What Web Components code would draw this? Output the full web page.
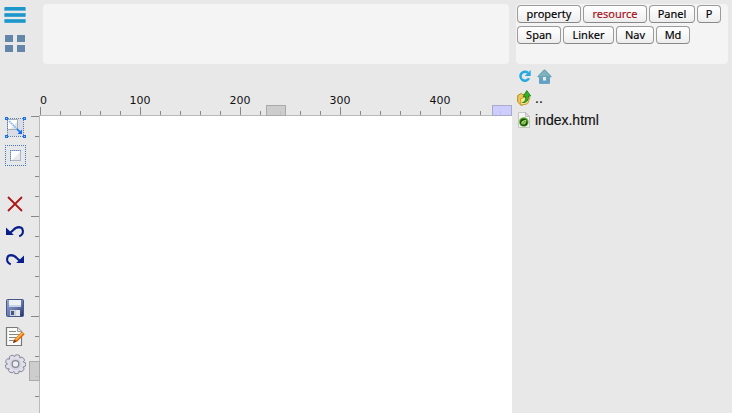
<!DOCTYPE html>
<html lang="en"><head><meta charset="utf-8"><title>Page editor</title>
<style>html,body{margin:0;width:100%;height:100%;overflow:hidden;background:#e8e8e8}</style></head>
<body><page-editor></page-editor>
<script>
const define=(name,html)=>customElements.define(name,class extends HTMLElement{
  constructor(){super();this.attachShadow({mode:'open'});}
  connectedCallback(){const t=document.createElement('template');t.innerHTML=typeof html==='function'?html(this):html;this.shadowRoot.replaceChildren(t.content.cloneNode(true));}
});
const corner=(x,y)=>`<path fill="#1470f0" d="M${x} ${y}h3v3h-3z"/><path fill="#9cc9ff" d="M${x+1} ${y+1}h1v1h-1z"/>`;
const gear=(()=>{let p='';for(let i=0;i<9;i++){const a=i*2*Math.PI/9-1.35;const f=(r,d)=>(10.5+r*Math.cos(a+d)).toFixed(1)+' '+(10.2+r*.93*Math.sin(a+d)).toFixed(1);p+=(i?'L':'M')+f(8,-.34)+'L'+f(10,-.22)+'Q'+f(10.8,0)+' '+f(10,.22)+'L'+f(8,.34);}return p+'Z';})();
const turn='<path d="M0 1.5V9h7.8z" fill="#071e8c"/><path d="M4.5 6.5L7 4.4M7 4.4C9 1.8 10.5 1.1 13 1.1C17.8 1.3 18.5 8.6 13.2 10.2" fill="none" stroke="#071e8c" stroke-width="2.1"/>';
const icons={
menu:[24,20,'<g fill="#62b4d8"><rect x="1" width="22" height="4" rx="1"/><rect x="1" y="6" width="22" height="4" rx="1"/><rect x="1" y="12" width="22" height="4" rx="1"/></g><g fill="#1c97ca"><path d="M2 0h20v3H2zM2 6.5h20v3H2zM2 12.5h20v3H2z"/></g>'],
grid:[20,18,'<path fill="#6487a9" d="M0 0h8v7H0zM12 0h8v7h-8zM0 10h8v7H0zM12 10h8v7h-8z"/>'],
resize:[21,21,'<path fill="#dadde5" d="M2 2h17v17H2z"/><rect x="2.5" y="2.5" width="10" height="10" fill="#fff" stroke="#a8adb9"/><path d="M12 5v7H5z" fill="#e6e6e8"/><path d="M3 1.5h15M3 19.5h15M2.5 3v15M18.5 3v15" shape-rendering="crispEdges" fill="none" stroke="#5e7da9" stroke-dasharray="1 1"/><path d="M4 4l9 9" stroke="#88bbf7" stroke-width="1.7" stroke-dasharray="2 .5"/><path d="M12 12l3 3" stroke="#2c82e8" stroke-width="1.8"/><path d="M17 12.5V17h-4.5z" fill="#126cea"/>'+corner(0,0)+corner(18,0)+corner(0,18)+corner(18,18)],
frame:[21,21,'<path d="M1 1h19v19H1z" fill="#e6e7e9"/><g shape-rendering="crispEdges" stroke="#3f77c4" stroke-dasharray="1 1"><path d="M0 .5h21M0 20.5h21M.5 0v21M20.5 0v21"/></g><rect x="5.5" y="5.5" width="10" height="10" fill="#fff" stroke="#b0b5bf"/><path d="M15 7v8H7z" fill="#e8e9ec"/><g shape-rendering="crispEdges" stroke="#578dcd" stroke-dasharray="1 1"><path d="M5 5.5h11M5.5 5v11"/></g>'],
remove:[16,16,'<path d="M1 1l14 14M15 1L1 15" stroke="#ad1719" stroke-width="1.8" fill="none"/>'],
undo:[18,12,turn],
redo:[18,12,`<g transform="matrix(-1 0 0 1 18 0)">${turn}</g>`],
save:[18,18,'<defs><linearGradient id="a" x1="0" y1="0" x2="1" y2="1"><stop stop-color="#9ba7ca"/><stop offset=".55" stop-color="#6476ac"/><stop offset="1" stop-color="#242e68"/></linearGradient></defs><rect x=".5" y=".5" width="17" height="17" rx="1" fill="url(#a)" stroke="#47578b"/><path d="M3 1h12v7H3z" fill="#edf2f8"/><path d="M3 6h12v2H3z" fill="#c3d3e8"/><path d="M4 11h10v6H4z" fill="#cbd0d5"/><path d="M5 12h3v4H5z" fill="#46558b"/><path d="M10 11h4v6h-4z" fill="#e4e6ea"/>'],
edit:[20,21,'<path d="M1.5 1.5h11l4 4v14h-15z" fill="#fafaf8" stroke="#777b78" stroke-width="1.2"/><path d="M12.5 1.5v4h4" fill="#e8e8e5" stroke="#999"/><path d="M4 5.5h7M4 8.5h10M4 11.5h8M4 14.5h5" stroke="#858986"/><path d="M8 17l1.5-3.8 7.5-7.7 2.7 2.7-7.7 7.5z" fill="#d9630d"/><path d="M10 13.2l7-7 1.4 1.4-6.6 6.7z" fill="#ffb03c"/><path d="M8 17l1.2-3 1.8 1.8z" fill="#4c3320"/>'],
gear:[21,21,`<path d="${gear}" fill="#e0e0ea" stroke="#85859a" stroke-linejoin="round"/><circle cx="10.5" cy="10.2" r="5.7" fill="#d3d3df"/><circle cx="10.5" cy="10" r="3.3" fill="#eee" stroke="#8a8998" stroke-width="1.3"/>`],
refresh:[12,12,'<path d="M10 8.3A4.5 4.5 0 1 1 8.9 2.8" stroke="#28a9e0" stroke-width="2.5" fill="none"/><path d="M11.7 0v5.9H5.7z" fill="#28a9e0"/>'],
home:[15,15,'<path d="M6 1.5Q7.5-.5 9 1.5l5.5 5.7Q15 8.5 13 8.5v5q0 1.2-1.2 1.2H3.2Q2 14.7 2 13.5v-5Q0 8.5.5 7.2z" fill="#6aa5b8"/><path d="M7.5 1.5L13 7H2z" fill="#7eb2bf"/><path d="M2.2 10h10.6v4q-.3.7-1 .7H3q-.8 0-.8-.7z" fill="#669fc4"/><path d="M6 8h3v3.5H6z" fill="#e3edf1"/>'],
folder:[15,16,'<path d="M.7 5.5l3.5-2 1.8 1.2 3.5-1.2v10L4 15.3.7 12z" fill="#edc85a" stroke="#b88c1d"/><path d="M3.5 8.5l7.8-2.2 1.8 1-2.5 6.4L4 15.2z" fill="#ffe995" stroke="#c49c2d"/><path d="M5.5 12.5c2.7-.5 3.4-2.6 3-6H6.2L9.8.6 13.7 6h-2.2c.4 4-1.8 7-6 6.5z" fill="#37b029" stroke="#167a13" stroke-width=".8"/>'],
file:[13,16,'<path d="M1.5.5h7l4 4v11h-11z" fill="#f5f5f5" stroke="#c5c5c5"/><path d="M8.5.5v4h4z" fill="#ddd" stroke="#aaa" stroke-width=".6"/><circle cx="6.8" cy="10" r="4.8" fill="#69b832"/><circle cx="6.8" cy="10.2" r="3.8" fill="#1c4d19"/><path d="M4.2 11.2q0-2.9 5.2-3.5 0 4.6-3 4.9-2.1 0-2.2-1.4z" fill="#a6df65"/><path d="M5.5 12l3-3" stroke="#327224" stroke-width=".8"/>']
};
define('ui-icon',e=>{const [w,h,s]=icons[e.getAttribute('name')];return `<style>:host{display:block;flex:none;width:${w}px;height:${h}px}svg{display:block}</style><svg width="${w}" height="${h}" viewBox="0 0 ${w} ${h}">${s}</svg>`});
define('tool-bar',`<style>:host{display:flex;flex-direction:column;align-items:flex-start;box-sizing:border-box;width:30px;padding:7px 0 0 6px;height:413px}
ui-icon[name=menu]{margin-left:-3px}ui-icon[name=resize],ui-icon[name=frame],ui-icon[name=gear],ui-icon[name=grid],ui-icon[name=edit]{margin-left:-1px}ui-icon[name=remove]{margin-left:1px}
ui-icon[name=grid]{margin-top:8px}ui-icon[name=resize]{margin-top:64px}ui-icon[name=frame]{margin-top:7px}ui-icon[name=remove]{margin-top:30px}ui-icon[name=undo]{margin-top:14px}ui-icon[name=redo]{margin-top:16px}ui-icon[name=save]{margin-top:33px}ui-icon[name=edit]{margin-top:9px}ui-icon[name=gear]{margin-top:7px}</style>${['menu','grid','resize','frame','remove','undo','redo','save','edit','gear'].map(x=>`<ui-icon name="${x}"></ui-icon>`).join('')}`);
define('option-panel','<style>:host{display:block;background:#f4f4f4;border-radius:4px;height:60px;box-sizing:border-box}</style><slot></slot>');
define('tab-button',e=>`<style>:host{display:block;width:${e.getAttribute('w')}px;height:18px;color:${e.hasAttribute('active')?'#a80d15':'#000'}}
button{display:flex;align-items:center;justify-content:center;box-sizing:border-box;width:100%;height:18px;padding:0 0 1px;border:1px solid #9b9b9b;border-bottom-color:#888;border-radius:4px;background:linear-gradient(#fff,#f7f7f7 50%,#ededed);color:inherit;font:11px "Noto Sans",sans-serif;-webkit-text-stroke:.15px;white-space:nowrap}</style><button><slot></slot></button>`);
define('tab-strip','<style>:host{display:grid;gap:3px;padding:1px}div{display:flex;gap:2px}</style><div><slot name="top"></slot></div><div><slot name="bottom"></slot></div>');
define('file-row','<style>:host{display:flex;align-items:center;height:22px;font:14px/22px "Liberation Sans",Arial,sans-serif;color:#111;-webkit-text-stroke:.15px}</style><slot name="icon"></slot><slot></slot>');
define('ruler-marker',e=>`<style>:host{position:absolute;box-sizing:border-box;border:1px solid ${e.hasAttribute('end')?'#aaaacb':'#aaa'};background:${e.hasAttribute('end')?'rgba(200,200,255,.88)':'rgba(200,200,200,.88)'}}</style>`);
define('ruler-top',()=>{let s='',n='';for(let i=0;i<24;i++)s+=`<path d="M${i*20+1.5} ${i%5?7:3}V11"/>`;for(let i=0;i<5;i++)n+=`<span>${i*100}</span>`;
return `<style>:host{display:block;position:relative;width:473px}svg{display:block;margin-top:-5px}div{display:grid;grid-template-columns:50px repeat(4,100px);padding:31px 0 0 1px;height:14px;font:11px/12px "DejaVu Sans",sans-serif;color:#111}span:not(:first-child){text-align:center}ruler-marker{bottom:0;height:11px;width:20px}.a{left:227px}.b{left:453px}</style><div>${n}</div><svg width="473" height="12"><g stroke="#888">${s}</g><path d="M0 11.5H473" stroke="#bbb"/></svg><ruler-marker class="a"></ruler-marker><ruler-marker class="b" end></ruler-marker>`});
define('ruler-left',()=>{let s='';for(let i=0;i<15;i++)s+=`<path d="M${i%5?5:1} ${i*20+.5}H9"/>`;
return `<style>:host{display:block;position:relative;width:10px;height:297px}svg{display:block}ruler-marker{left:-1px;top:245px;width:11px;height:20px}</style><svg width="10" height="297"><g stroke="#888">${s}</g><path d="M9.5 0V297" stroke="#bbb"/></svg><ruler-marker></ruler-marker>`});
define('work-area','<style>:host{display:grid;grid-template:52px 297px/10px 472px}ruler-top{grid-column:1/3;margin-left:9px;height:52px}main{background:#fff}</style><ruler-top></ruler-top><ruler-left></ruler-left><main></main>');
define('page-editor',`<style>:host{display:grid;grid-template-columns:30px 482px 220px;width:732px;height:413px;background:#e8e8e8;overflow:hidden}.center{padding-top:4px}.center option-panel{margin:0 3px 0 13px}aside{padding:4px 4px 0}nav{display:flex;align-items:center;height:22px;margin:1px 0 0 3px;gap:6px}file-row ui-icon[name=folder]{margin:0 3px 0 1px}file-row ui-icon[name=file]{margin:0 5px 0 1px}</style>
<tool-bar></tool-bar><section class="center"><option-panel></option-panel><work-area></work-area></section>
<aside><option-panel><tab-strip><tab-button slot="top" w="64">property</tab-button><tab-button slot="top" w="64" active>resource</tab-button><tab-button slot="top" w="46">Panel</tab-button><tab-button slot="top" w="24">P</tab-button><tab-button slot="bottom" w="44">Span</tab-button><tab-button slot="bottom" w="51">Linker</tab-button><tab-button slot="bottom" w="38">Nav</tab-button><tab-button slot="bottom" w="34">Md</tab-button></tab-strip></option-panel><nav><ui-icon name="refresh"></ui-icon><ui-icon name="home"></ui-icon></nav><file-row><ui-icon slot="icon" name="folder"></ui-icon>..</file-row><file-row><ui-icon slot="icon" name="file"></ui-icon>index.html</file-row></aside>`);
</script></body></html>
